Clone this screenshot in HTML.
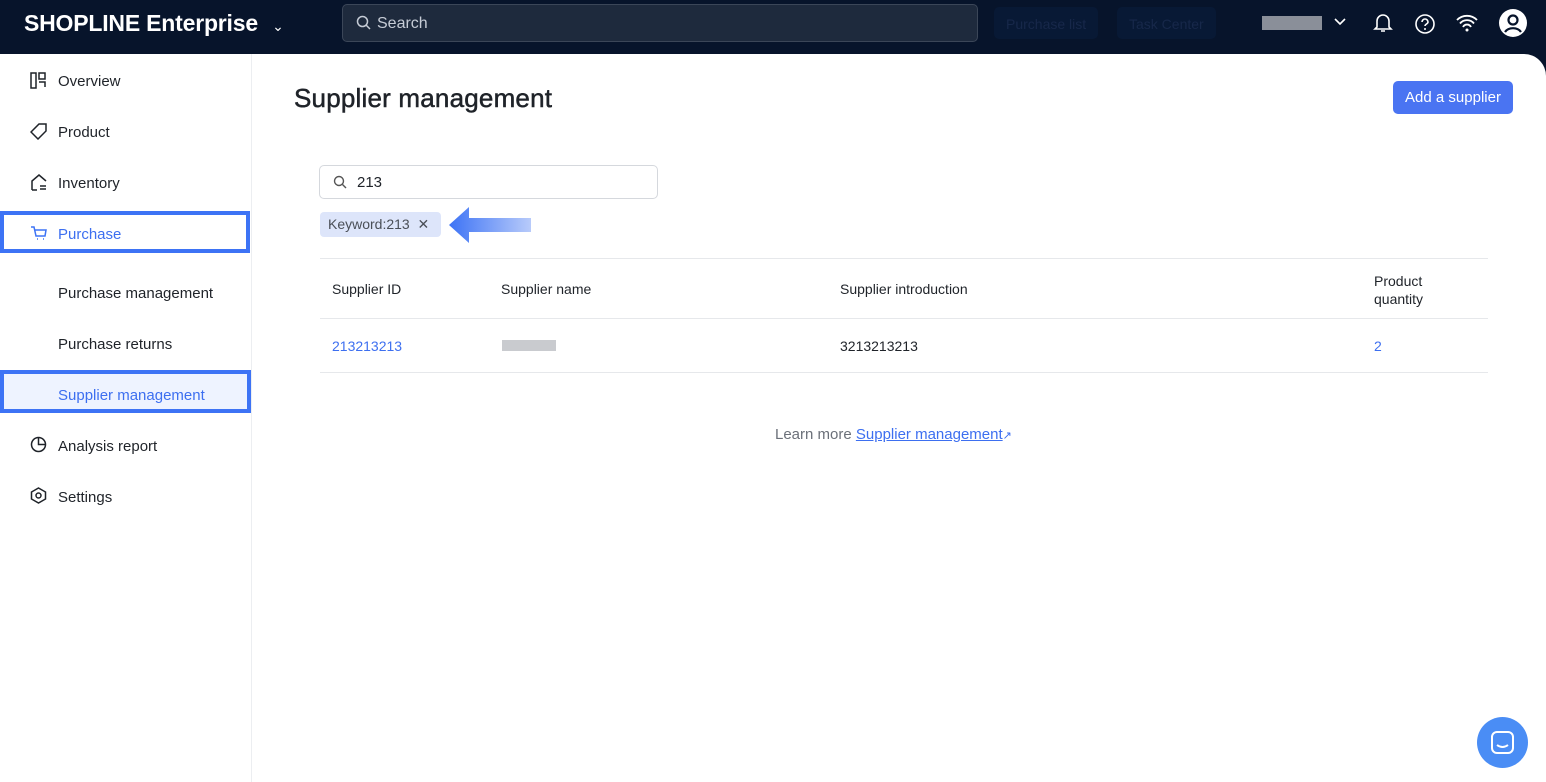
<!DOCTYPE html>
<html><head><style>
*{box-sizing:border-box;margin:0;padding:0}
body{width:1546px;height:782px;overflow:hidden;background:#07142b;font-family:"Liberation Sans",sans-serif;position:relative}
.top{position:absolute;left:0;top:0;width:1546px;height:54px;background:#07142b}
.logo{position:absolute;left:24px;top:10px;color:#fff;font-size:23px;font-weight:bold;letter-spacing:-0.2px}
.search{position:absolute;left:342px;top:4px;width:636px;height:38px;border:1px solid #3b4658;background:#1e2a3d;border-radius:5px;color:#c6ccd6;font-size:16px;padding:10px 0 0 34px}
.tb{position:absolute;top:7px;height:32px;background:#081935;border-radius:5px;color:#17284a;font-size:14px;padding:9px 12px}
.main{position:absolute;left:0;top:54px;width:1546px;height:728px;background:#fff;border-top-right-radius:22px}
.side{position:absolute;left:0;top:0;width:252px;height:728px;border-right:1px solid #eceef1}
.it{position:absolute;left:58px;font-size:15px;color:#1f2329;margin-top:2px}
.ic{position:absolute;left:30px;width:17px;height:17px}
.box{position:absolute;border:4px solid #3d73f5}
h1{position:absolute;left:294px;top:29px;font-size:26px;font-weight:normal;color:#1f2329;-webkit-text-stroke:.5px #1f2329;letter-spacing:0.2px}
.btn{position:absolute;left:1393px;top:27px;width:120px;height:33px;background:#4a74f2;border-radius:5px;color:#fff;font-size:15px;text-align:center;line-height:33px}
.inp{position:absolute;left:319px;top:111px;width:339px;height:34px;border:1px solid #d5d8dd;border-radius:5px;font-size:15px;color:#1f2329;padding:8px 0 0 37px}
.tag{position:absolute;left:320px;top:158px;width:121px;height:25px;background:#dde5fa;border-radius:4px;font-size:14px;color:#4a4f57;padding:4px 0 0 8px}
.line{position:absolute;left:320px;width:1168px;height:1px;background:#e6e8eb}
.th,.td{position:absolute;font-size:14px;color:#1f2329}
.link{color:#3d6ff0}
</style></head><body>
<div class="top">
<div class="logo">SHOPLINE Enterprise <span style="font-size:14px;font-weight:normal;margin-left:8px">&#8964;</span></div>
<div class="search">Search</div>
<svg style="position:absolute;left:356px;top:15px" width="16" height="16"><circle cx="6.5" cy="6.5" r="5" stroke="#c6ccd6" stroke-width="1.5" fill="none"/><path d="M10 10l4 4" stroke="#c6ccd6" stroke-width="1.5"/></svg>
<div class="tb" style="left:994px">Purchase list</div>
<div class="tb" style="left:1117px">Task Center</div>
<div style="position:absolute;left:1262px;top:16px;width:60px;height:14px;background:#8a8f99"></div>
<svg style="position:absolute;left:1333px;top:16px" width="14" height="12"><path d="M2 3l5 5 5-5" stroke="#fff" stroke-width="1.6" fill="none"/></svg>
<svg style="position:absolute;left:1373px;top:12px" width="20" height="22"><path d="M4 15V9a6 6 0 0112 0v6l2 2H2z M8 19h4" stroke="#fff" stroke-width="1.6" fill="none"/></svg>
<svg style="position:absolute;left:1414px;top:13px" width="22" height="22"><circle cx="11" cy="11" r="9" stroke="#fff" stroke-width="1.6" fill="none"/><path d="M8 9a3 3 0 116 0c0 2-3 2-3 4" stroke="#fff" stroke-width="1.6" fill="none"/><circle cx="11" cy="16" r="1" fill="#fff"/></svg>
<svg style="position:absolute;left:1455px;top:13px" width="24" height="20"><path d="M2 7a14 14 0 0120 0M5 10.5a9 9 0 0114 0M8 14a4.5 4.5 0 018 0" stroke="#fff" stroke-width="1.8" fill="none"/><circle cx="12" cy="17" r="1.5" fill="#fff"/></svg>
<svg style="position:absolute;left:1498px;top:8px" width="30" height="30"><circle cx="15" cy="15" r="14" fill="#fff"/><circle cx="15" cy="12" r="4.5" stroke="#07142b" stroke-width="2.2" fill="none"/><path d="M7 24a9 7 0 0116 0" stroke="#07142b" stroke-width="2.2" fill="none"/></svg>
</div>
<div class="main">
<div class="side">
<svg class="ic" style="top:18px" viewBox="0 0 17 17"><rect x="1" y="1" width="5" height="15" stroke="#1f2329" stroke-width="1.5" fill="none"/><rect x="9" y="1" width="6" height="6" stroke="#1f2329" stroke-width="1.5" fill="none"/><path d="M9 10h6v5" stroke="#1f2329" stroke-width="1.5" fill="none"/></svg>
<div class="it" style="top:17px">Overview</div>
<svg class="ic" style="top:69px" viewBox="0 0 17 17"><path d="M9 1h7v7l-8 8-7-7z" stroke="#1f2329" stroke-width="1.5" fill="none"/></svg>
<div class="it" style="top:68px">Product</div>
<svg class="ic" style="top:120px" viewBox="0 0 17 17"><path d="M2 16V7l7-6 7 6M2 16h5M10 12h6M10 15h6" stroke="#1f2329" stroke-width="1.5" fill="none"/></svg>
<div class="it" style="top:119px">Inventory</div>
<div class="box" style="left:0;top:157px;width:250px;height:42px"></div>
<svg class="ic" style="top:171px" viewBox="0 0 17 17"><path d="M1 2h3l2 9h9l1-6H5M7 14h1M13 14h1" stroke="#3d73f5" stroke-width="1.5" fill="none"/></svg>
<div class="it" style="top:170px;color:#3d6ff0">Purchase</div>
<div class="it" style="top:229px">Purchase management</div>
<div class="it" style="top:280px">Purchase returns</div>
<div class="box" style="left:0;top:316px;width:251px;height:43px;background:#eef3ff"></div>
<div class="it" style="top:331px;color:#3d6ff0">Supplier management</div>
<svg class="ic" style="top:382px" viewBox="0 0 17 17"><circle cx="8.5" cy="8.5" r="7" stroke="#1f2329" stroke-width="1.5" fill="none"/><path d="M8.5 1.5v7h7" stroke="#1f2329" stroke-width="1.5" fill="none"/></svg>
<div class="it" style="top:382px">Analysis report</div>
<svg class="ic" style="top:433px" viewBox="0 0 17 17"><path d="M8.5 1l7 4v7l-7 4-7-4V5z" stroke="#1f2329" stroke-width="1.5" fill="none"/><circle cx="8.5" cy="8.5" r="2.5" stroke="#1f2329" stroke-width="1.5" fill="none"/></svg>
<div class="it" style="top:433px">Settings</div>
</div>
<h1>Supplier management</h1>
<div class="btn">Add a supplier</div>
<div class="inp">213</div>
<svg style="position:absolute;left:333px;top:121px" width="14" height="14"><circle cx="6" cy="6" r="4.5" stroke="#555" stroke-width="1.4" fill="none"/><path d="M9.5 9.5l3.5 3.5" stroke="#555" stroke-width="1.4"/></svg>
<div class="tag">Keyword:213 &nbsp;✕</div>
<svg style="position:absolute;left:449px;top:151px" width="84" height="40"><defs><linearGradient id="g"><stop offset="0" stop-color="#3d73f5"/><stop offset="1" stop-color="#b8cbfa"/></linearGradient></defs><path d="M0 20L20 2v11h62v14H20v11z" fill="url(#g)"/></svg>
<div class="line" style="top:204px"></div>
<div class="th" style="left:332px;top:227px">Supplier ID</div>
<div class="th" style="left:501px;top:227px">Supplier name</div>
<div class="th" style="left:840px;top:227px">Supplier introduction</div>
<div class="th" style="left:1374px;top:218px;line-height:18px">Product<br>quantity</div>
<div class="line" style="top:264px"></div>
<div class="td link" style="left:332px;top:284px">213213213</div>
<div style="position:absolute;left:502px;top:286px;width:54px;height:11px;background:#c9cbcf"></div>
<div class="td" style="left:840px;top:284px">3213213213</div>
<div class="td link" style="left:1374px;top:284px">2</div>
<div class="line" style="top:318px"></div>
<div style="position:absolute;left:775px;top:372px;font-size:15px;color:#6b7079">Learn more <span class="link" style="text-decoration:underline">Supplier management</span><span class="link" style="font-size:11px">↗</span></div>
<div style="position:absolute;left:1477px;top:663px;width:51px;height:51px;border-radius:50%;background:#4a8df5"><svg style="position:absolute;left:14px;top:14px" width="23" height="23"><rect x="1" y="1" width="21" height="21" rx="5" stroke="#fff" stroke-width="2" fill="none"/><path d="M6 14q5.5 4 11 0" stroke="#fff" stroke-width="2" fill="none"/></svg></div>
</div>
</body></html>
